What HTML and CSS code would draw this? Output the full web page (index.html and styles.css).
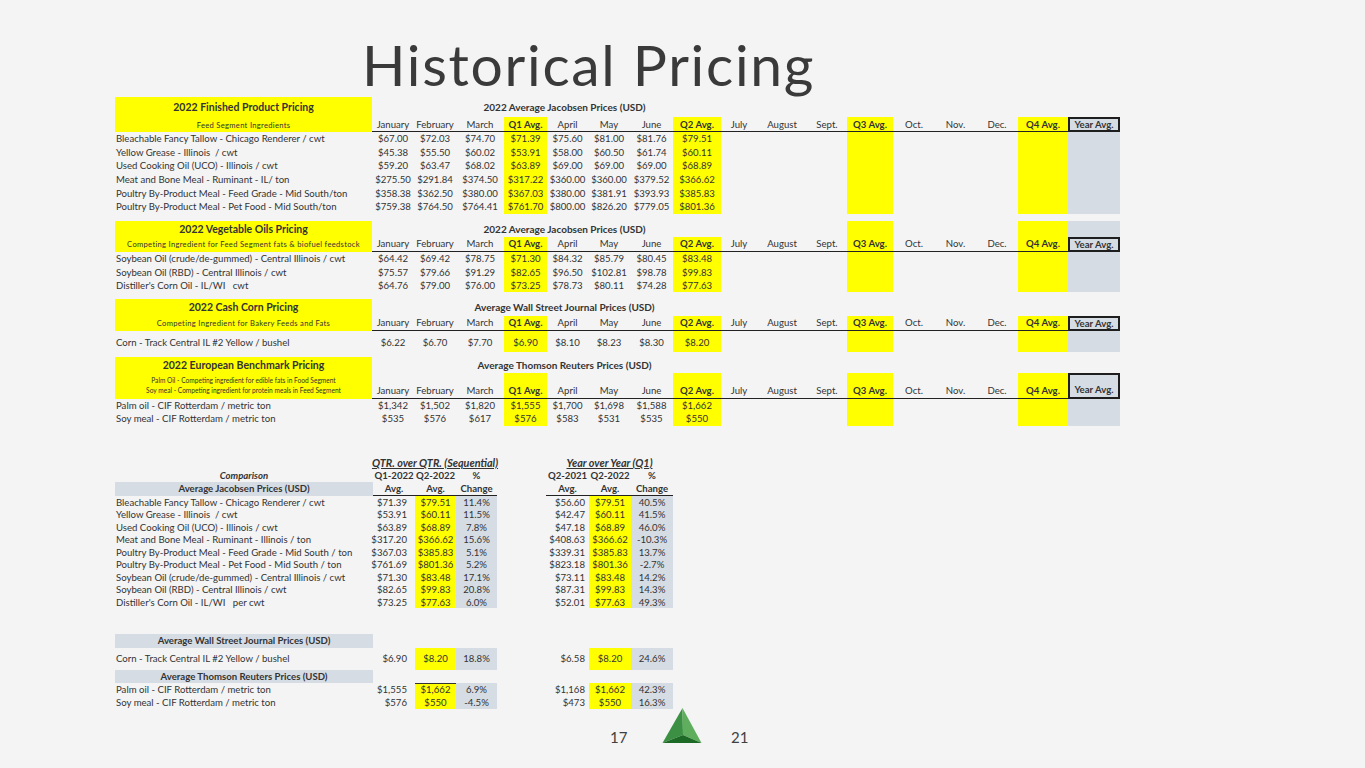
FILE: index.html
```html
<!DOCTYPE html>
<html>
<head>
<meta charset="utf-8">
<title>Historical Pricing</title>
<link rel="stylesheet" href="styles.css">
</head>
<body>
<div class="slide">
  <h1 class="title">Historical Pricing</h1>

  <div class="upper">
    <!-- Section 1 -->
    <div class="sec s1">
      <div class="lab"><div class="lt t1">2022 Finished Product Pricing</div><div class="ls">Feed Segment Ingredients</div></div>
      <div class="ttl">2022 Average Jacobsen Prices (USD)</div>
      <div></div><div></div><div></div><div></div><div></div><div></div><div></div><div></div>
      <div class="h">January</div><div class="h">February</div><div class="h">March</div><div class="h y b">Q1 Avg.</div><div class="h">April</div><div class="h">May</div><div class="h">June</div><div class="h y b">Q2 Avg.</div><div class="h">July</div><div class="h">August</div><div class="h">Sept.</div><div class="h y b">Q3 Avg.</div><div class="h">Oct.</div><div class="h">Nov.</div><div class="h">Dec.</div><div class="h y b">Q4 Avg.</div><div class="ya">Year Avg.</div>

      <div class="n">Bleachable Fancy Tallow - Chicago Renderer / cwt</div><div>$67.00</div><div>$72.03</div><div>$74.70</div><div class="y">$71.39</div><div>$75.60</div><div>$81.00</div><div>$81.76</div><div class="y">$79.51</div><div></div><div></div><div></div><div class="y"></div><div></div><div></div><div></div><div class="y"></div><div class="g"></div>
      <div class="n">Yellow Grease - Illinois  / cwt</div><div>$45.38</div><div>$55.50</div><div>$60.02</div><div class="y">$53.91</div><div>$58.00</div><div>$60.50</div><div>$61.74</div><div class="y">$60.11</div><div></div><div></div><div></div><div class="y"></div><div></div><div></div><div></div><div class="y"></div><div class="g"></div>
      <div class="n">Used Cooking Oil (UCO) - Illinois / cwt</div><div>$59.20</div><div>$63.47</div><div>$68.02</div><div class="y">$63.89</div><div>$69.00</div><div>$69.00</div><div>$69.00</div><div class="y">$68.89</div><div></div><div></div><div></div><div class="y"></div><div></div><div></div><div></div><div class="y"></div><div class="g"></div>
      <div class="n">Meat and Bone Meal - Ruminant - IL/ ton</div><div>$275.50</div><div>$291.84</div><div>$374.50</div><div class="y">$317.22</div><div>$360.00</div><div>$360.00</div><div>$379.52</div><div class="y">$366.62</div><div></div><div></div><div></div><div class="y"></div><div></div><div></div><div></div><div class="y"></div><div class="g"></div>
      <div class="n">Poultry By-Product Meal - Feed Grade - Mid South/ton</div><div>$358.38</div><div>$362.50</div><div>$380.00</div><div class="y">$367.03</div><div>$380.00</div><div>$381.91</div><div>$393.93</div><div class="y">$385.83</div><div></div><div></div><div></div><div class="y"></div><div></div><div></div><div></div><div class="y"></div><div class="g"></div>
      <div class="n">Poultry By-Product Meal - Pet Food - Mid South/ton</div><div>$759.38</div><div>$764.50</div><div>$764.41</div><div class="y">$761.70</div><div>$800.00</div><div>$826.20</div><div>$779.05</div><div class="y">$801.36</div><div></div><div></div><div></div><div class="y"></div><div></div><div></div><div></div><div class="y"></div><div class="g"></div>
    </div>

    <!-- Section 2 -->
    <div class="sec s2">
      <div class="lab"><div class="lt t2">2022 Vegetable Oils Pricing</div><div class="ls">Competing Ingredient for Feed Segment fats &amp; biofuel feedstock</div></div>
      <div class="ttl">2022 Average Jacobsen Prices (USD)</div>
      <div></div><div></div><div class="y"></div><div></div><div></div><div></div><div class="y"></div><div class="g"></div>
      <div class="h">January</div><div class="h">February</div><div class="h">March</div><div class="h y b">Q1 Avg.</div><div class="h">April</div><div class="h">May</div><div class="h">June</div><div class="h y b">Q2 Avg.</div><div class="h">July</div><div class="h">August</div><div class="h">Sept.</div><div class="h y b">Q3 Avg.</div><div class="h">Oct.</div><div class="h">Nov.</div><div class="h">Dec.</div><div class="h y b">Q4 Avg.</div><div class="ya">Year Avg.</div>

      <div class="n">Soybean Oil (crude/de-gummed) - Central Illinois / cwt</div><div>$64.42</div><div>$69.42</div><div>$78.75</div><div class="y">$71.30</div><div>$84.32</div><div>$85.79</div><div>$80.45</div><div class="y">$83.48</div><div></div><div></div><div></div><div class="y"></div><div></div><div></div><div></div><div class="y"></div><div class="g"></div>
      <div class="n">Soybean Oil (RBD) - Central Illinois / cwt</div><div>$75.57</div><div>$79.66</div><div>$91.29</div><div class="y">$82.65</div><div>$96.50</div><div>$102.81</div><div>$98.78</div><div class="y">$99.83</div><div></div><div></div><div></div><div class="y"></div><div></div><div></div><div></div><div class="y"></div><div class="g"></div>
      <div class="n">Distiller's Corn Oil - IL/WI   cwt</div><div>$64.76</div><div>$79.00</div><div>$76.00</div><div class="y">$73.25</div><div>$78.73</div><div>$80.11</div><div>$74.28</div><div class="y">$77.63</div><div></div><div></div><div></div><div class="y"></div><div></div><div></div><div></div><div class="y"></div><div class="g"></div>
    </div>

    <!-- Section 3 -->
    <div class="sec s3">
      <div class="lab"><div class="lt t3">2022 Cash Corn Pricing</div><div class="ls">Competing Ingredient for Bakery Feeds and Fats</div></div>
      <div class="ttl">Average Wall Street Journal Prices (USD)</div>
      <div></div><div></div><div></div><div></div><div></div><div></div><div></div><div></div>
      <div class="h">January</div><div class="h">February</div><div class="h">March</div><div class="h y b">Q1 Avg.</div><div class="h">April</div><div class="h">May</div><div class="h">June</div><div class="h y b">Q2 Avg.</div><div class="h">July</div><div class="h">August</div><div class="h">Sept.</div><div class="h y b">Q3 Avg.</div><div class="h">Oct.</div><div class="h">Nov.</div><div class="h">Dec.</div><div class="h y b">Q4 Avg.</div><div class="ya">Year Avg.</div>

      <div class="n low">Corn - Track Central IL #2 Yellow / bushel</div><div class="low">$6.22</div><div class="low">$6.70</div><div class="low">$7.70</div><div class="y low">$6.90</div><div class="low">$8.10</div><div class="low">$8.23</div><div class="low">$8.30</div><div class="y low">$8.20</div><div></div><div></div><div></div><div class="y"></div><div></div><div></div><div></div><div class="y"></div><div class="g"></div>
    </div>

    <!-- Section 4 -->
    <div class="sec s4">
      <div class="lab"><div class="lt t4">2022 European Benchmark Pricing</div><div class="ls2">Palm Oil - Competing ingredient for edible fats in Food Segment<br>Soy meal - Competing ingredient for protein meals in Feed Segment</div></div>
      <div class="ttl">Average Thomson Reuters Prices (USD)</div>
      <div></div><div></div><div></div><div></div><div></div><div></div><div></div><div></div>
      <div class="h">January</div><div class="h">February</div><div class="h">March</div><div class="h y b">Q1 Avg.</div><div class="h">April</div><div class="h">May</div><div class="h">June</div><div class="h y b">Q2 Avg.</div><div class="h">July</div><div class="h">August</div><div class="h">Sept.</div><div class="h y b">Q3 Avg.</div><div class="h">Oct.</div><div class="h">Nov.</div><div class="h">Dec.</div><div class="h y b">Q4 Avg.</div><div class="ya">Year Avg.</div>

      <div class="n">Palm oil - CIF Rotterdam / metric ton</div><div>$1,342</div><div>$1,502</div><div>$1,820</div><div class="y">$1,555</div><div>$1,700</div><div>$1,698</div><div>$1,588</div><div class="y">$1,662</div><div></div><div></div><div></div><div class="y"></div><div></div><div></div><div></div><div class="y"></div><div class="g"></div>
      <div class="n">Soy meal - CIF Rotterdam / metric ton</div><div>$535</div><div>$576</div><div>$617</div><div class="y">$576</div><div>$583</div><div>$531</div><div>$535</div><div class="y">$550</div><div></div><div></div><div></div><div class="y"></div><div></div><div></div><div></div><div class="y"></div><div class="g"></div>
    </div>
  </div>

  <!-- Comparison table -->
  <div class="lower">
    <div></div><div class="grp">QTR. over QTR. (Sequential)</div><div></div><div class="grp2">Year over Year (Q1)</div>

    <div class="cmp">Comparison</div><div class="b">Q1-2022</div><div class="b">Q2-2022</div><div class="b">%</div><div></div><div class="b">Q2-2021</div><div class="b">Q2-2022</div><div class="b">%</div>

    <div class="gl">Average Jacobsen Prices (USD)</div><div class="u b">Avg.</div><div class="u b">Avg.</div><div class="u b">Change</div><div></div><div class="u b">Avg.</div><div class="u b">Avg.</div><div class="u b">Change</div>

    <div class="n">Bleachable Fancy Tallow - Chicago Renderer / cwt</div><div class="ra">$71.39</div><div class="y">$79.51</div><div class="g">11.4%</div><div></div><div class="rb">$56.60</div><div class="y">$79.51</div><div class="g">40.5%</div>
    <div class="n">Yellow Grease - Illinois  / cwt</div><div class="ra">$53.91</div><div class="y">$60.11</div><div class="g">11.5%</div><div></div><div class="rb">$42.47</div><div class="y">$60.11</div><div class="g">41.5%</div>
    <div class="n">Used Cooking Oil (UCO) - Illinois / cwt</div><div class="ra">$63.89</div><div class="y">$68.89</div><div class="g">7.8%</div><div></div><div class="rb">$47.18</div><div class="y">$68.89</div><div class="g">46.0%</div>
    <div class="n">Meat and Bone Meal - Ruminant - Illinois / ton</div><div class="ra">$317.20</div><div class="y">$366.62</div><div class="g">15.6%</div><div></div><div class="rb">$408.63</div><div class="y">$366.62</div><div class="g">-10.3%</div>
    <div class="n">Poultry By-Product Meal - Feed Grade - Mid South / ton</div><div class="ra">$367.03</div><div class="y">$385.83</div><div class="g">5.1%</div><div></div><div class="rb">$339.31</div><div class="y">$385.83</div><div class="g">13.7%</div>
    <div class="n">Poultry By-Product Meal - Pet Food - Mid South / ton</div><div class="ra">$761.69</div><div class="y">$801.36</div><div class="g">5.2%</div><div></div><div class="rb">$823.18</div><div class="y">$801.36</div><div class="g">-2.7%</div>
    <div class="n">Soybean Oil (crude/de-gummed) - Central Illinois / cwt</div><div class="ra">$71.30</div><div class="y">$83.48</div><div class="g">17.1%</div><div></div><div class="rb">$73.11</div><div class="y">$83.48</div><div class="g">14.2%</div>
    <div class="n">Soybean Oil (RBD) - Central Illinois / cwt</div><div class="ra">$82.65</div><div class="y">$99.83</div><div class="g">20.8%</div><div></div><div class="rb">$87.31</div><div class="y">$99.83</div><div class="g">14.3%</div>
    <div class="n">Distiller's Corn Oil - IL/WI   per cwt</div><div class="ra">$73.25</div><div class="y">$77.63</div><div class="g">6.0%</div><div></div><div class="rb">$52.01</div><div class="y">$77.63</div><div class="g">49.3%</div>

    <div class="spacer"></div>

    <div class="gl">Average Wall Street Journal Prices (USD)</div><div></div><div></div><div></div><div></div><div></div><div></div><div></div>
    <div class="n">Corn - Track Central IL #2 Yellow / bushel</div><div class="ra">$6.90</div><div class="y">$8.20</div><div class="g">18.8%</div><div></div><div class="rb">$6.58</div><div class="y">$8.20</div><div class="g">24.6%</div>

    <div class="gl">Average Thomson Reuters Prices (USD)</div><div></div><div></div><div></div><div></div><div></div><div></div><div></div>
    <div class="n">Palm oil - CIF Rotterdam / metric ton</div><div class="ra">$1,555</div><div class="y bt">$1,662</div><div class="g">6.9%</div><div></div><div class="rb">$1,168</div><div class="y">$1,662</div><div class="g">42.3%</div>
    <div class="n">Soy meal - CIF Rotterdam / metric ton</div><div class="ra">$576</div><div class="y">$550</div><div class="g">-4.5%</div><div></div><div class="rb">$473</div><div class="y">$550</div><div class="g">16.3%</div>
  </div>

  <div class="foot">
    <div class="pg pg1">17</div>
    <svg class="logo" width="40" height="36" viewBox="0 0 40 36" aria-label="logo">
      <polygon points="20.5,0 0.5,35 21,27" fill="#3c9043"/>
      <polygon points="20.5,0 21,27 39.5,35" fill="#5eae5e"/>
      <polygon points="0.5,35 21,27 39.5,35" fill="#1c6a25"/>
    </svg>
    <div class="pg pg2">21</div>
  </div>
</div>
</body>
</html>
```

FILE: styles.css
```css
* { box-sizing: border-box; margin: 0; padding: 0; }

body {
  margin: 0;
  background: #f4f4f4;
  font-family: Lato, "Open Sans", "Liberation Sans", sans-serif;
  color: #333;
}

.slide {
  width: 1365px;
  height: 768px;
  overflow: hidden;
  background: #f4f4f4;
}

.title {
  height: 93px;
  padding: 36px 0 0 362px;
  font-size: 57px;
  line-height: 57px;
  font-weight: 400;
  letter-spacing: 1.7px;
  color: #3a3a3a;
}

/* ---------- upper pricing sections ---------- */
.upper {
  margin: 4px 0 0 115px;
  width: 1005px;
}

.sec {
  display: grid;
  grid-template-columns: 257px 42px 42px 48px 43px 41px 42px 43px 48px 36px 50px 40px 46px 42px 41px 42px 50px 52px;
  font-size: 9.6px;
}

.sec > div {
  display: flex;
  align-items: center;
  justify-content: center;
  white-space: nowrap;
}

.s1 { grid-template-rows: 20px 15px repeat(6, 13.6px); }
.s2 { margin-top: 7.4px; grid-template-rows: 16px 15px repeat(3, 13.5px); }
.s3 { margin-top: 6.5px; grid-template-rows: 17px 15px 21px; }
.s4 { margin-top: 5px; grid-template-rows: 16px 26px repeat(2, 13.3px); }

.sec > .lab {
  grid-row: span 2;
  background: #ffff00;
  flex-direction: column;
  justify-content: flex-start;
  align-items: stretch;
}

.lt {
  font-weight: 700;
  font-size: 10.5px;
  text-align: center;
  display: flex;
  align-items: center;
  justify-content: center;
}
.t1 { height: 20px; }
.t2 { height: 16px; }
.t3 { height: 17px; }
.t4 { height: 16px; }

.ls {
  flex: 1;
  display: flex;
  align-items: center;
  justify-content: center;
  font-size: 7.6px;
  letter-spacing: 0.3px;
}

.ls2 {
  flex: 1;
  display: flex;
  align-items: flex-end;
  justify-content: center;
  padding-bottom: 4px;
  text-align: center;
  font-size: 6.6px;
  line-height: 10px;
}

.sec > .ttl {
  grid-column: 2 / 11;
  font-weight: 700;
  font-size: 10px;
}

.sec > .h { border-bottom: 1px solid #222; }
.s4 > .h, .s4 > .ya { align-items: flex-end; padding-bottom: 2px; }

.sec > .ya {
  background: #d6dce4;
  border: 2px solid #1e1e1e;
  font-weight: 700;
}

.y { background: #ffff00; }
.g { background: #d6dce4; }
.b { font-weight: 700; }

.sec > .n,
.lower > .n {
  justify-content: flex-start;
  padding-left: 1px;
  white-space: pre;
}

.sec > .low { padding-top: 3px; }

/* ---------- comparison table ---------- */
.lower {
  margin: 30.4px 0 0 115px;
  display: grid;
  grid-template-columns: 258px 42px 41px 41px 49px 43px 42px 42px;
  grid-template-rows: 13px 13px 14px repeat(9, 12.5px) 25.5px 14px 22px 13px 13px 13px;
  font-size: 9.6px;
  width: 558px;
}

.lower > div {
  display: flex;
  align-items: center;
  justify-content: center;
  white-space: nowrap;
}

.lower > .grp,
.lower > .grp2 {
  font-weight: 700;
  font-style: italic;
  text-decoration: underline;
  font-size: 10.8px;
}
.lower > .grp { grid-column: 2 / 5; }
.lower > .grp2 { grid-column: 6 / 9; }

.lower > .cmp {
  font-weight: 700;
  font-style: italic;
}

.lower > .gl {
  background: #d6dce4;
  font-weight: 700;
}

.lower > .u { border-bottom: 1px solid #222; }

.lower > .ra { justify-content: flex-end; padding-right: 8px; }
.lower > .rb { justify-content: flex-end; padding-right: 4px; }

.lower > .bt { border-top: 1px solid #333; }

.lower > .spacer { grid-column: 1 / -1; }

/* ---------- footer ---------- */
.foot {
  display: flex;
  align-items: flex-start;
  padding-left: 610px;
  height: 50px;
}

.pg {
  font-size: 15px;
  line-height: 20px;
  padding-top: 18px;
  color: #404040;
}

.pg1 { width: 52px; }

.logo {
  display: block;
  margin-top: -1px;
}

.pg2 { margin-left: 29px; }
```
